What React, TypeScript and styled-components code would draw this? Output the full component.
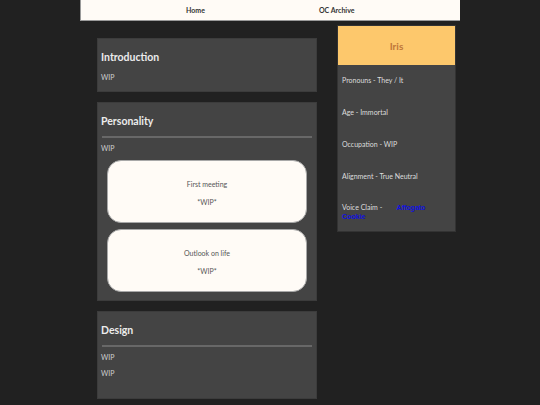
import React from 'react';
import styled, { createGlobalStyle } from 'styled-components';

const GlobalStyle = createGlobalStyle`
    html, body {
        margin: 0;
        padding: 0;
        background-color: #212121;
        font-family: Lato, "Noto Sans", sans-serif;
    }
`

const infoItems = [
    'Pronouns - They / It',
    'Age - Immortal',
    'Occupation - WIP',
    'Alignment - True Neutral',
];

export default function App() {
    return (
        <Page>
            <GlobalStyle />
            <NavBar>
                <NavLink href='#'>Home</NavLink>
                <NavLink href='#'>OC Archive</NavLink>
            </NavBar>
            <Content>
                <MainColumn>
                    <Section bottom={9}>
                        <SectionTitle>Introduction</SectionTitle>
                        <Text>WIP</Text>
                    </Section>
                    <Section bottom={8}>
                        <SectionTitle>Personality</SectionTitle>
                        <Divider />
                        <Text>WIP</Text>
                        <Bubbles>
                            <Bubble>
                                <BubbleTitle>First meeting</BubbleTitle>
                                <BubbleText>*WIP*</BubbleText>
                            </Bubble>
                            <Bubble>
                                <BubbleTitle>Outlook on life</BubbleTitle>
                                <BubbleText>*WIP*</BubbleText>
                            </Bubble>
                        </Bubbles>
                    </Section>
                    <Section bottom={20}>
                        <SectionTitle>Design</SectionTitle>
                        <Divider />
                        <Text>WIP</Text>
                        <Text>WIP</Text>
                    </Section>
                </MainColumn>
                <Sidebar>
                    <NameHeader>Iris</NameHeader>
                    {infoItems.map((item) => (
                        <InfoItem key={item}>{item}</InfoItem>
                    ))}
                    <VoiceItem>
                        Voice Claim -&nbsp;&nbsp;&nbsp;&nbsp;&nbsp;&nbsp;&nbsp;&nbsp;<VoiceLink href='#'>Affogato Cookie</VoiceLink>
                    </VoiceItem>
                </Sidebar>
            </Content>
        </Page>
    );
}

const Page = styled.div`
    min-height: 405px;
    background-color: #212121;
`

const NavBar = styled.nav`
    width: 380px;
    height: 21px;
    box-sizing: border-box;
    margin: 0 auto;
    display: flex;
    align-items: center;
    gap: 114px;
    padding-left: 105px;
    background-color: #fffbf6;
    border-left: 1px solid #9a9a9a;
    border-bottom: 1px solid #9a9a9a;
`

const NavLink = styled.a`
    color: #333333;
    font-size: 7px;
    font-weight: 700;
    text-decoration: none;
`

const Content = styled.div`
    width: 359px;
    margin: 0 auto;
    padding: 0 4px 0 17px;
    display: flex;
    align-items: flex-start;
    gap: 20px;
`

const MainColumn = styled.div`
    width: 220px;
    padding-top: 17px;
    display: flex;
    flex-direction: column;
    gap: 10px;
`

const Section = styled.section<{ bottom: number }>`
    background-color: #444444;
    border: 1px solid #3c3c3c;
    padding: 0 4px ${(p) => p.bottom}px 3px;
`

const SectionTitle = styled.h2`
    margin: 11px 0 0;
    font-size: 10.5px;
    line-height: 14px;
    font-weight: 700;
    color: #ececec;
`

const Divider = styled.hr`
    margin: 8px 0 5px 1px;
    border: none;
    height: 2px;
    background-color: #686868;
`

const Text = styled.p`
    margin: 8px 0 0;
    font-size: 7px;
    line-height: 10px;
    color: #cfcfcf;
    ${Divider} + & {
        margin-top: 0;
    }
    & + & {
        margin-top: 6px;
    }
`

const Bubbles = styled.div`
    display: flex;
    flex-direction: column;
    gap: 6px;
    margin: 7px 5px 0 6px;
`

const Bubble = styled.div`
    height: 63px;
    box-sizing: border-box;
    padding-top: 18px;
    background-color: #fffbf6;
    border: 1px solid #a8a8a8;
    border-radius: 14px;
    text-align: center;
    color: #555555;
    font-size: 7px;
    line-height: 10px;
`

const BubbleTitle = styled.div``

const BubbleText = styled.div`
    margin-top: 8px;
`

const Sidebar = styled.aside`
    width: 117px;
    margin-top: 4px;
    background-color: #444444;
    border: 1px solid #333333;
    padding-bottom: 10px;
`

const NameHeader = styled.h1`
    margin: 0;
    height: 39px;
    display: flex;
    align-items: center;
    justify-content: center;
    background-color: #fdc86c;
    color: #c0763a;
    font-size: 10px;
    font-weight: 700;
`

const InfoItem = styled.div`
    padding: 10px 4px 12px;
    font-size: 7px;
    line-height: 10px;
    color: #dddddd;
`

const VoiceItem = styled(InfoItem)`
    padding: 10px 22px 0 4px;
    line-height: 9px;
`

const VoiceLink = styled.a`
    color: #1010e0;
    font-family: "Liberation Sans", Arial, sans-serif;
    font-weight: 700;
    text-decoration: none;
`
